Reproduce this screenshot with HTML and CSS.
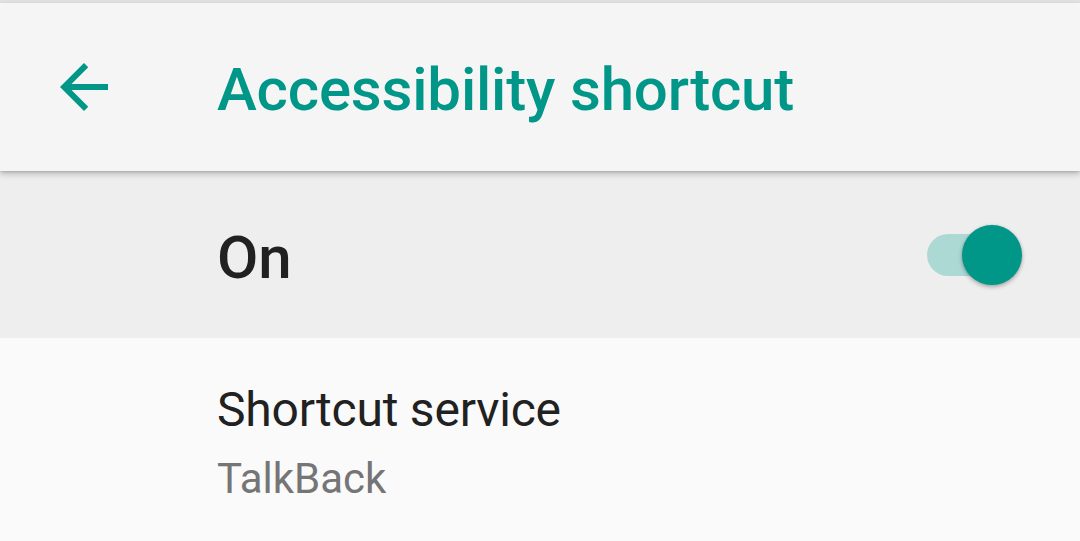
FILE: index.html
```html
<!DOCTYPE html>
<html>
<head>
<meta charset="utf-8">
<link rel="stylesheet" href="styles.css">
</head>
<body>
<div class="status-edge"></div>
<header class="toolbar">
  <div class="nav-icon">
    <svg width="72" height="72" viewBox="0 0 24 24"><path fill="#009688" d="M20 11H7.83l5.59-5.59L12 4l-8 8 8 8 1.41-1.41L7.83 13H20v-2z"/></svg>
  </div>
  <h1 class="title">Accessibility shortcut</h1>
</header>
<section class="switch-bar">
  <span class="switch-label">On</span>
  <div class="switch">
    <div class="track"></div>
    <div class="thumb"></div>
  </div>
</section>
<section class="list">
  <div class="item">
    <div class="item-title">Shortcut service</div>
    <div class="item-summary">TalkBack</div>
  </div>
</section>
</body>
</html>
```
FILE: styles.css
```css
* { box-sizing: border-box; }
html, body { margin: 0; padding: 0; }
body {
  width: 1080px;
  height: 541px;
  overflow: hidden;
  background: #fafafa;
  font-family: Roboto, "Noto Sans", sans-serif;
}
.status-edge {
  height: 3px;
  background: #e2e2e2;
}
.toolbar {
  position: relative;
  z-index: 2;
  height: 168px;
  background: #f5f5f5;
  display: flex;
  align-items: center;
  box-shadow: 0 3px 6px rgba(0,0,0,0.22), 0 1px 2px rgba(0,0,0,0.12);
}
.nav-icon {
  width: 72px;
  height: 72px;
  margin-left: 48px;
  display: flex;
}
.title {
  margin: 0 0 0 97px;
  padding-top: 4px;
  font-size: 60px;
  font-weight: 500;
  letter-spacing: -0.18px;
  color: #009688;
  line-height: normal;
}
.switch-bar {
  height: 167px;
  background: #eeeeee;
  display: flex;
  align-items: center;
  justify-content: space-between;
  padding-left: 217px;
  padding-right: 58px;
}
.switch-label {
  font-size: 60px;
  font-weight: 500;
  color: #212121;
  padding-top: 6px;
}
.switch {
  position: relative;
  width: 95px;
  height: 60px;
  display: flex;
  align-items: center;
}
.track {
  width: 88px;
  height: 42px;
  border-radius: 21px;
  background: #acd9d4;
}
.thumb {
  position: absolute;
  right: 0;
  top: 0;
  width: 60px;
  height: 60px;
  border-radius: 50%;
  background: #009688;
  box-shadow: 0 2px 4px rgba(0,0,0,0.3), 0 0 2px rgba(0,0,0,0.12);
}
.item {
  padding: 44px 0 0 217px;
}
.item-title {
  font-size: 48px;
  line-height: 56px;
  letter-spacing: -0.2px;
  color: #212121;
}
.item-summary {
  margin-top: 16px;
  font-size: 42px;
  line-height: 50px;
  color: #757575;
}
```
